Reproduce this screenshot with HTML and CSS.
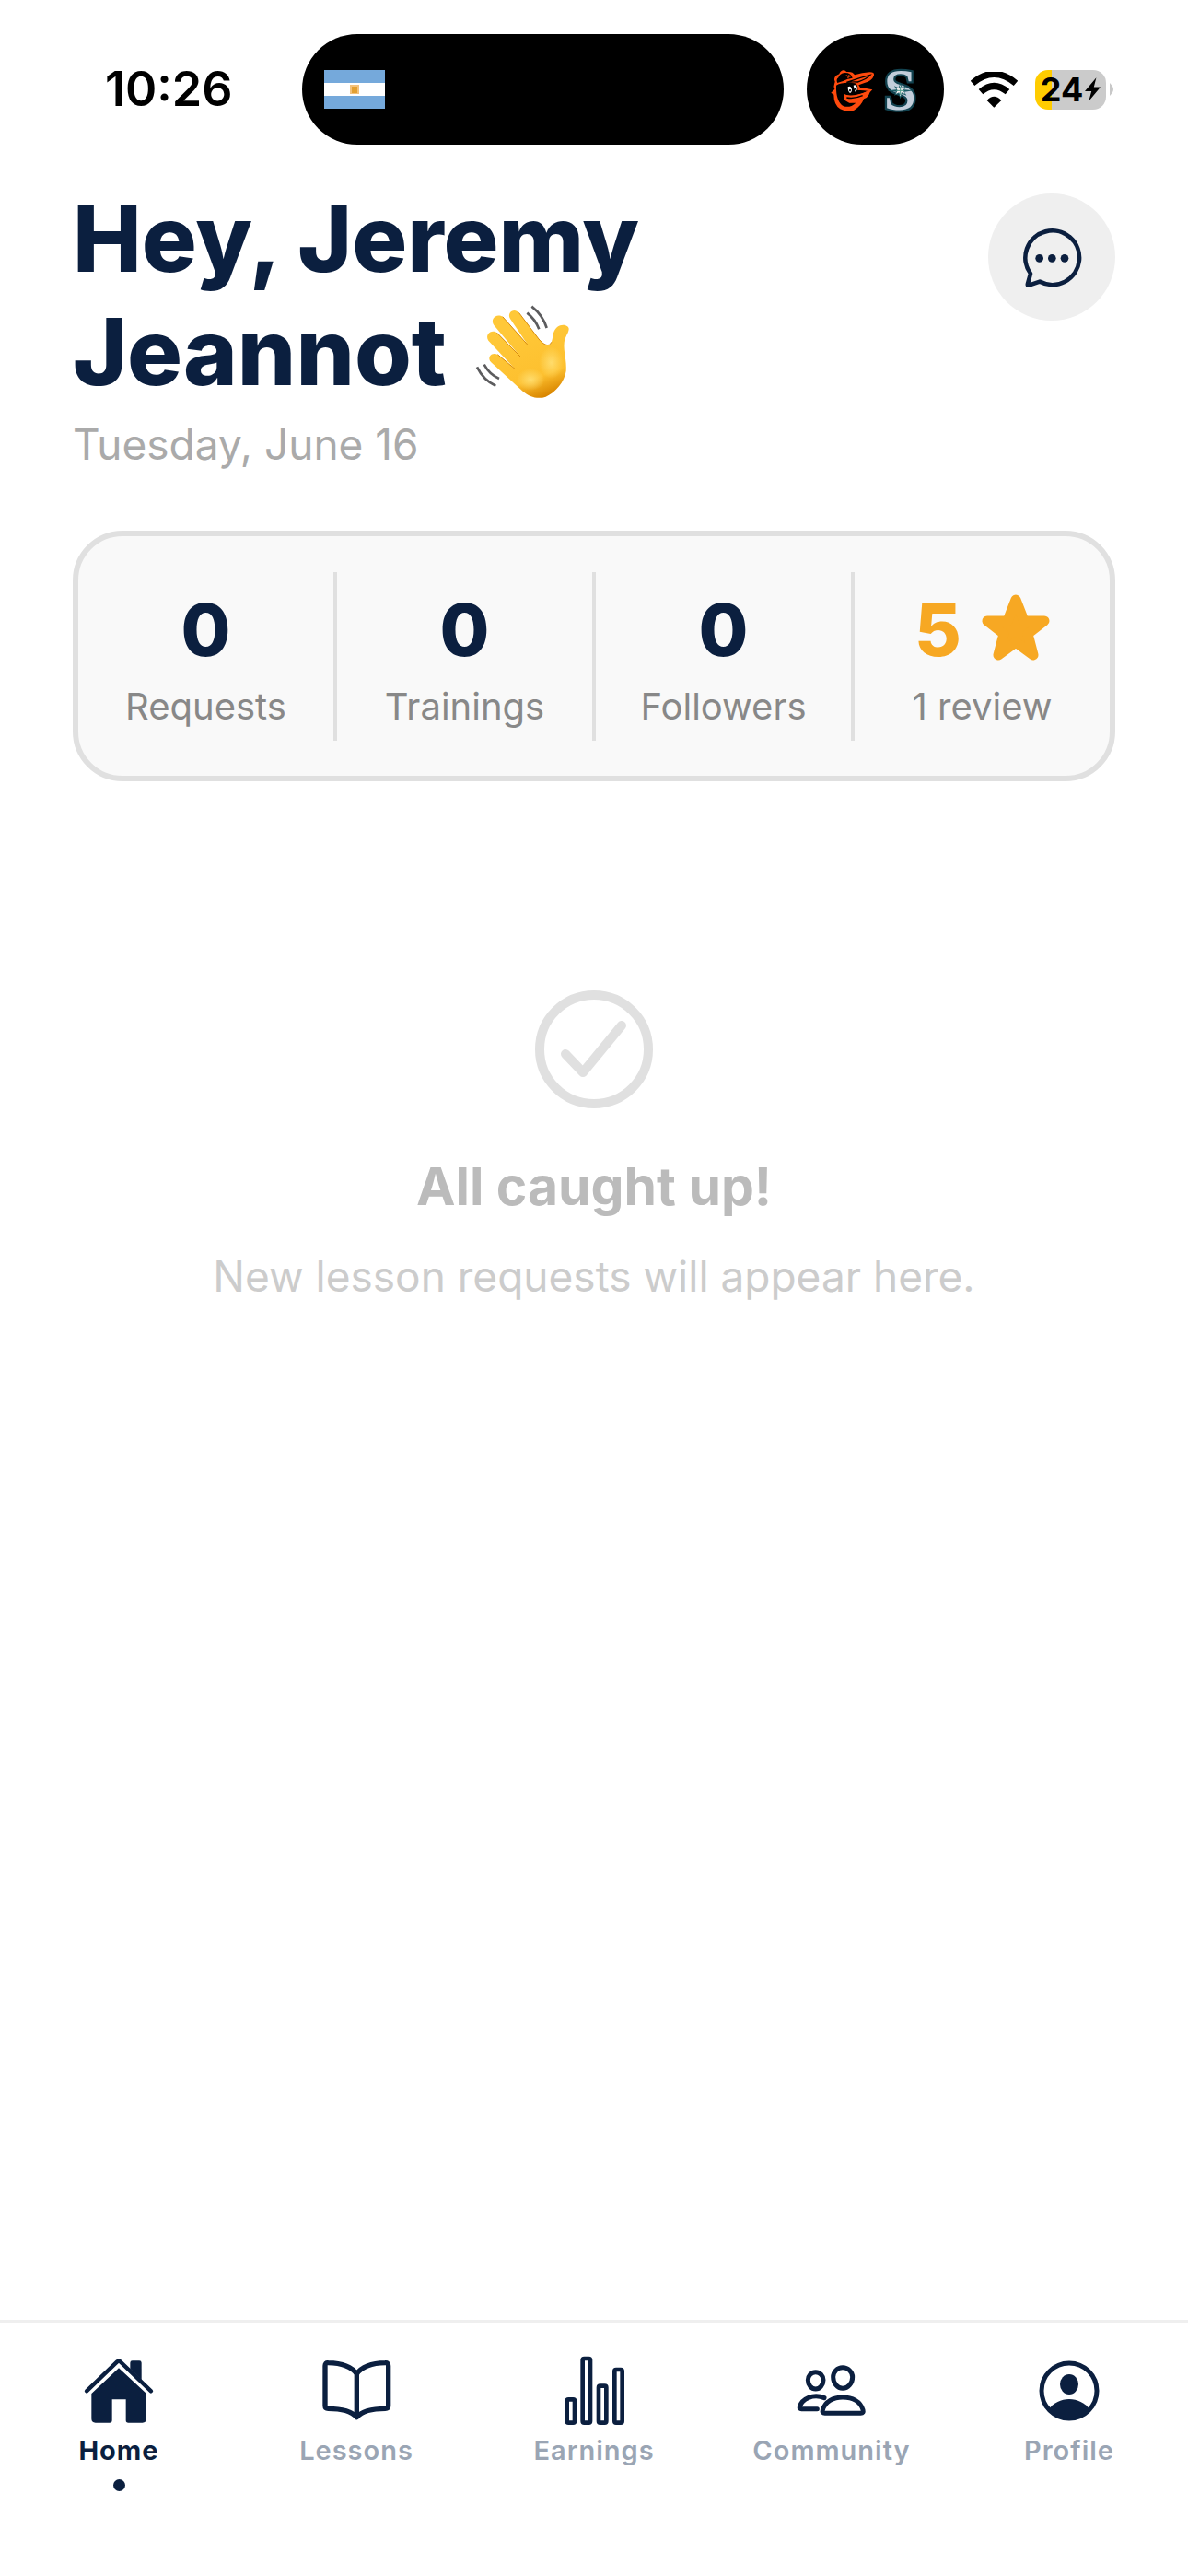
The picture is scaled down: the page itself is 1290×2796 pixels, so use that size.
FILE: index.html
```
<!DOCTYPE html>
<html lang="en">
	<head>
		<meta charset="UTF-8">
		<meta name="viewport" content="width=device-width, initial-scale=1">
		<title>Home</title>
		<link rel="stylesheet" href="styles.css">
	</head>
	<body>
		<!-- status bar -->
		<div class="status">
			<span class="time">10:26</span>
			<div class="island">
				<svg class="flag" viewBox="0 0 66 42">
					<rect width="66" height="42" fill="#75a9db"/>
					<rect y="14" width="66" height="14" fill="#fff"/>
					<rect x="28" y="16" width="10" height="10" fill="#f4c27c"/>
					<rect x="30" y="18" width="6" height="7" fill="#e3a032"/>
				</svg>
			</div>
			<div class="island small">
				<svg class="teams" viewBox="0 -72 345 297">
					<path d="M37 86 L49 74 Q44 68 48 58 L50 50 Q44 38 55 29 L64 25 Q66 14 80 12 L88 18 Q108 16 114 28 Q138 21 163 19 Q179 19 177 29 Q171 47 146 54 L127 61 L132 69 Q153 71 172 76 Q162 84 160 93 Q155 103 144 106 Q135 130 112 143 Q88 150 67 139 Q46 125 46 92 Z" fill="#ff4a0d"/>
					<path d="M61 37 Q64 23 83 21 Q103 21 107 38 Q88 41 76 48 L58 54 Q52 43 61 37 Z" fill="#000"/>
					<path d="M86 29 l9 5 l8 -3 M96 28 l-4 12" fill="none" stroke="#c33a0b" stroke-width="4"/>
					<path d="M88 52 Q130 37 165 28 Q154 41 124 51 Q108 50 88 52 Z" fill="none" stroke="#000" stroke-width="4"/>
					<path d="M54 62 Q75 50 115 55 Q126 60 124 78 Q142 77 156 80 Q135 92 106 96 Q88 96 82 90 Q74 100 82 110 Q92 120 118 119 Q100 136 78 130 Q52 114 54 62 Z" fill="#000"/>
					<path d="M84 92 Q112 100 156 81 Q149 91 150 97 Q136 99 134 106 Q124 120 96 119 Q82 110 84 92 Z" fill="#ff4a0d"/>
					<path d="M88 102 Q112 107 140 95" fill="none" stroke="#000" stroke-width="4"/>
					<path d="M92 67 q8 -5 12 4 q3 11 -5 16 q-7 -4 -7 -20 Z M110 62 q9 -4 12 6 q2 10 -6 15 Z" fill="#fff"/>
					<path d="M99 75 v7 M116 70 v7" stroke="#000" stroke-width="5"/>
					<text class="team-s" x="262" y="141" text-anchor="middle">S</text>
					<path d="M263 53 l6 17 l14 -6 l-7 12 l29 3 l-29 4 l7 12 l-14 -6 l-6 17 l-6 -17 l-14 6 l7 -12 l-29 -4 l29 -3 l-7 -12 l14 6 Z" fill="#1c5c66"/>
					<path d="M263 60 l4 13 l11 -5 l-6 11 l6 11 l-11 -5 l-4 13 l-4 -13 l-11 5 l6 -11 l-6 -11 l11 5 Z" fill="#f1eeee"/>
					<path d="M263 66 v27 M250 79 h26" stroke="#4e9a8c" stroke-width="3"/>
				</svg>
			</div>
			<!-- wifi -->
			<svg class="wifi" viewBox="0 0 153 117">
				<path d="M6 37 Q76 -23 147 37" fill="none" stroke="#000" stroke-width="21"/>
				<path d="M33 65 Q76 28 120 65" fill="none" stroke="#000" stroke-width="21"/>
				<path d="M76 116 L53 93 Q76 68 100 93 Z"/>
			</svg>
			<div class="battery">
				<span>24</span>
				<svg class="bolt" viewBox="0 0 52 78">
					<path d="M38 0 L0 45 H22 L13 78 L52 31 H30 Z"/>
				</svg>
			</div>
			<svg class="nub" viewBox="0 0 4 14">
				<path d="M0 0 Q4 4 4 7 Q4 10 0 14 Z" fill="#c8c8c8"/>
			</svg>
		</div>

		<header class="header">
			<div class="greeting">
				<h1>Hey, Jeremy Jeannot
					<svg class="wave" viewBox="48 54 318 318" role="img" aria-label="waving hand">
						<defs>
							<linearGradient id="skin" x1="0.3" y1="0" x2="0.65" y2="1">
								<stop offset="0.2" stop-color="#ffc838"/>
								<stop offset="0.78" stop-color="#fdc02f"/>
								<stop offset="1" stop-color="#d98600"/>
							</linearGradient>
							<radialGradient id="palm">
								<stop offset="0" stop-color="#ffdc6c"/>
								<stop offset="1" stop-color="#ffdc6c" stop-opacity="0"/>
							</radialGradient>
						</defs>
						<path d="M165 105 C153 85 178 67 194 86 L258 171 C274 190 292 199 299 182 C306 166 301 147 318 132 C333 120 355 125 356 138 C356 151 343 163 341 183 C338 212 350 241 347 275 C342 310 313 344 281 359 C253 368 228 359 206 341 L103 247 C87 229 106 211 125 222 L179 267 L94 176 C81 156 105 138 122 151 L197 227 L112 126 C98 105 121 85 141 99 L222 190 Z" fill="url(#skin)"/>
						<path d="M125 222 L179 267 M122 151 L197 227 M141 99 L222 190 M194 86 L258 171 C274 190 292 199 299 182" fill="none" stroke="#d78b0b" stroke-width="3" stroke-linecap="round"/>
						<ellipse cx="299" cy="248" rx="40" ry="52" fill="url(#palm)"/>
						<ellipse cx="232" cy="303" rx="45" ry="36" fill="url(#palm)"/>
						<path d="M220 86 Q247 107 259 139 M235 65 Q271 93 284 135 M80 254 Q98 287 129 300 M57 262 Q78 305 118 323" fill="none" stroke="#5c5c5e" stroke-width="8"/>
					</svg>
				</h1>
				<p class="date">Tuesday, June 16</p>
			</div>
			<button class="chat" type="button" aria-label="Messages">
				<svg viewBox="150 138 195 195">
					<path d="M177 288 A88 88 0 1 1 207 314 L172 326 Q166 328 168 321 Z" fill="none" stroke="#0b1f3f" stroke-width="14" stroke-linejoin="round"/>
					<circle cx="206" cy="238" r="13"/>
					<circle cx="247" cy="238" r="13"/>
					<circle cx="288" cy="238" r="13"/>
				</svg>
			</button>
		</header>

		<section class="stats">
			<div class="stat">
				<div class="num">0</div>
				<div class="label">Requests</div>
			</div>
			<div class="stat">
				<div class="num">0</div>
				<div class="label">Trainings</div>
			</div>
			<div class="stat">
				<div class="num">0</div>
				<div class="label">Followers</div>
			</div>
			<div class="stat">
				<div class="num rating">5
					<svg class="star" viewBox="0 0 74 72">
						<path d="M37 6 L46 29 H68 L50 43 L56 66 L37 52 L18 66 L24 43 L6 29 H28 Z" fill="#f7a823" stroke="#f7a823" stroke-width="11" stroke-linejoin="round"/>
					</svg>
				</div>
				<div class="label">1 review</div>
			</div>
		</section>

		<main class="empty">
			<svg class="check" viewBox="0 0 130 130" fill="none" stroke="#e0e0e0" stroke-width="10" stroke-linecap="round" stroke-linejoin="round">
				<circle cx="65" cy="65" r="59"/>
				<path d="M34 70 L53 90 L95 39"/>
			</svg>
			<h2>All caught up!</h2>
			<p>New lesson requests will appear here.</p>
		</main>

		<nav class="tabs">
			<a class="tab active" href="#">
				<svg viewBox="90 168 234 234">
					<path d="M102 286 L201 191 Q207 185 213 191 L312 286" fill="none" stroke="#0b1f3f" stroke-width="13" stroke-linecap="round"/>
					<path d="M244 213 V194 Q244 187 251 187 H274 Q281 187 281 194 V250 Z"/>
					<path d="M207 211 L297 294 V376 Q297 389 284 389 H238 Q230 389 230 381 V313 H185 V381 Q185 389 177 389 H131 Q118 389 118 376 V294 Z"/>
				</svg>
				<span>Home</span>
			</a>
			<a class="tab" href="#">
				<svg viewBox="864 168 234 234" fill="none" stroke="#0b1f3f" stroke-width="16" stroke-linejoin="round">
					<path d="M982 230 Q957 195 889 194 Q879 193 879 204 V334 Q879 343 889 343 Q958 343 982 371 Q1006 343 1075 343 Q1085 343 1085 334 V204 Q1085 193 1075 194 Q1007 195 982 230 V371"/>
				</svg>
				<span>Lessons</span>
			</a>
			<a class="tab" href="#">
				<svg viewBox="18 33 234 234" fill="none" stroke="#0b1f3f" stroke-width="14">
					<rect x="47" y="178" width="25" height="76" rx="5"/>
					<rect x="98" y="45" width="25" height="209" rx="5"/>
					<rect x="150" y="134" width="25" height="120" rx="5"/>
					<rect x="202" y="81" width="25" height="173" rx="5"/>
				</svg>
				<span>Earnings</span>
			</a>
			<a class="tab" href="#">
				<svg viewBox="792 33 234 234" fill="none" stroke="#0b1f3f" stroke-width="15" stroke-linecap="round" stroke-linejoin="round">
					<path d="M945 74 C962 74 977 88 977 105 C977 125 963 142 945 142 C928 142 914 125 914 105 C914 88 928 74 945 74 Z"/>
					<path d="M857 89 C871 89 882 101 882 115 C882 130 871 144 857 144 C843 144 832 130 832 115 C832 101 843 89 857 89 Z"/>
					<path d="M887 223 Q877 223 880 212 C888 184 915 171 945 171 C976 171 1003 184 1011 212 Q1014 223 1004 223 Z"/>
					<path d="M885 173 C850 158 812 176 805 202 Q803 209 811 209 H862"/>
				</svg>
				<span>Community</span>
			</a>
			<a class="tab" href="#">
				<svg viewBox="0 0 78 78">
					<circle cx="39" cy="39" r="30" fill="none" stroke="#0b1f3f" stroke-width="5"/>
					<ellipse cx="39" cy="32" rx="10" ry="11"/>
					<path d="M17 59 C22 52 30 48 39 48 C48 48 56 52 61 59 C56 66 48 70 39 70 C30 70 22 66 17 59 Z"/>
				</svg>
				<span>Profile</span>
			</a>
		</nav>
	</body>
</html>
```
FILE: styles.css
```
* {
	margin: 0;
	padding: 0;
	box-sizing: border-box;
}

body {
	min-height: 100vh;
	display: flex;
	flex-direction: column;
	background: #fff;
	color: #0b1f3f;
	font-family: Inter, "Liberation Sans", sans-serif;
}

svg {
	display: block;
}

/* status bar */
.status {
	display: flex;
	align-items: center;
	padding: 37px 81px 0 0;
	color: #000;
}
.time {
	flex: 0 0 328px;
	padding-left: 114px;
	font-size: 52px;
	line-height: 60px;
	font-weight: 600;
}
.island {
	flex: 1;
	height: 120px;
	padding-left: 24px;
	border-radius: 60px;
	background: #000;
	display: flex;
	align-items: center;
}
.island.small {
	flex: 0 0 149px;
	margin: 0 29px 0 25px;
	padding-left: 14px;
}
.flag {
	width: 66px;
	height: 42px;
}
.teams {
	width: 115px;
	height: 99px;
	flex-shrink: 0;
}
.team-s {
	font-family: "Liberation Serif", serif;
	font-weight: bold;
	font-size: 190px;
	fill: #c3cedb;
	stroke: #12424f;
	stroke-width: 14px;
	paint-order: stroke;
}
.wifi {
	width: 51px;
	height: 39px;
	margin-right: 19px;
}
.battery {
	width: 77px;
	height: 43px;
	border-radius: 14px;
	background: linear-gradient(to right, #ffcc00 18px, #cbcbcb 18px);
	display: flex;
	align-items: center;
	justify-content: center;
	gap: 2px;
	font-size: 36px;
	line-height: 43px;
	font-weight: 700;
}
.bolt {
	width: 17px;
	height: 26px;
}
.nub {
	width: 4px;
	height: 14px;
	margin-left: 4px;
}

/* greeting */
.header {
	display: flex;
	align-items: flex-start;
	gap: 24px;
	padding: 40px 79px 0;
}
.greeting {
	flex: 1;
}
h1 {
	font-size: 100px;
	line-height: 123px;
	font-weight: 800;
}
.wave {
	display: inline-block;
	width: 106px;
	height: 106px;
	margin-left: 8px;
	vertical-align: -17px;
}
.date {
	margin-top: 11px;
	font-size: 46px;
	line-height: 56px;
	color: #aaa;
}
.chat {
	width: 138px;
	height: 138px;
	margin-top: 13px;
	border: none;
	border-radius: 50%;
	background: #efefef;
	display: flex;
	align-items: center;
	justify-content: center;
}
.chat svg {
	width: 65px;
	height: 65px;
	fill: #0b1f3f;
}

/* stats card */
.stats {
	display: flex;
	margin: 66px 79px 0;
	padding: 39px 0 38px;
	border: 6px solid #e0e0e0;
	border-radius: 54px;
	background: #f9f9f9;
}
.stat {
	flex: 1;
	padding: 16px 0 14px;
	text-align: center;
}
.stat + .stat {
	border-left: 4px solid #e0e0e0;
}
.num {
	font-size: 78px;
	line-height: 94px;
	font-weight: 800;
}
.rating {
	display: flex;
	justify-content: center;
	align-items: center;
	gap: 22px;
	color: #f7a823;
}
.star {
	width: 74px;
	height: 72px;
	margin-bottom: 6px;
}
.label {
	margin-top: 12px;
	font-size: 40px;
	line-height: 47px;
	color: #888;
}

/* empty state */
.empty {
	flex: 1;
	display: flex;
	flex-direction: column;
	align-items: center;
	padding-top: 226px;
}
.check {
	width: 130px;
	height: 130px;
}
.empty h2 {
	margin-top: 49px;
	font-size: 57px;
	line-height: 70px;
	font-weight: 700;
	color: #bbb;
}
.empty p {
	margin-top: 34px;
	font-size: 46px;
	line-height: 56px;
	color: #ccc;
}

/* bottom tabs */
.tabs {
	display: flex;
	padding: 35px 0 118px;
	border-top: 3px solid #efefef;
}
.tab {
	flex: 1;
	position: relative;
	display: flex;
	flex-direction: column;
	align-items: center;
	gap: 8px;
	font-size: 29px;
	line-height: 36px;
	font-weight: 600;
	letter-spacing: 1px;
	color: #9aa5b4;
	text-decoration: none;
}
.tab svg {
	width: 78px;
	height: 78px;
	fill: #0b1f3f;
}
.tab svg[fill="none"] {
	fill: none;
}
.active {
	color: #0b1f3f;
	font-weight: 700;
}
/* dot under the current tab */
.active::after {
	content: "";
	position: absolute;
	top: 135px;
	width: 13px;
	height: 13px;
	border-radius: 50%;
	background: #0b1f3f;
}
```
